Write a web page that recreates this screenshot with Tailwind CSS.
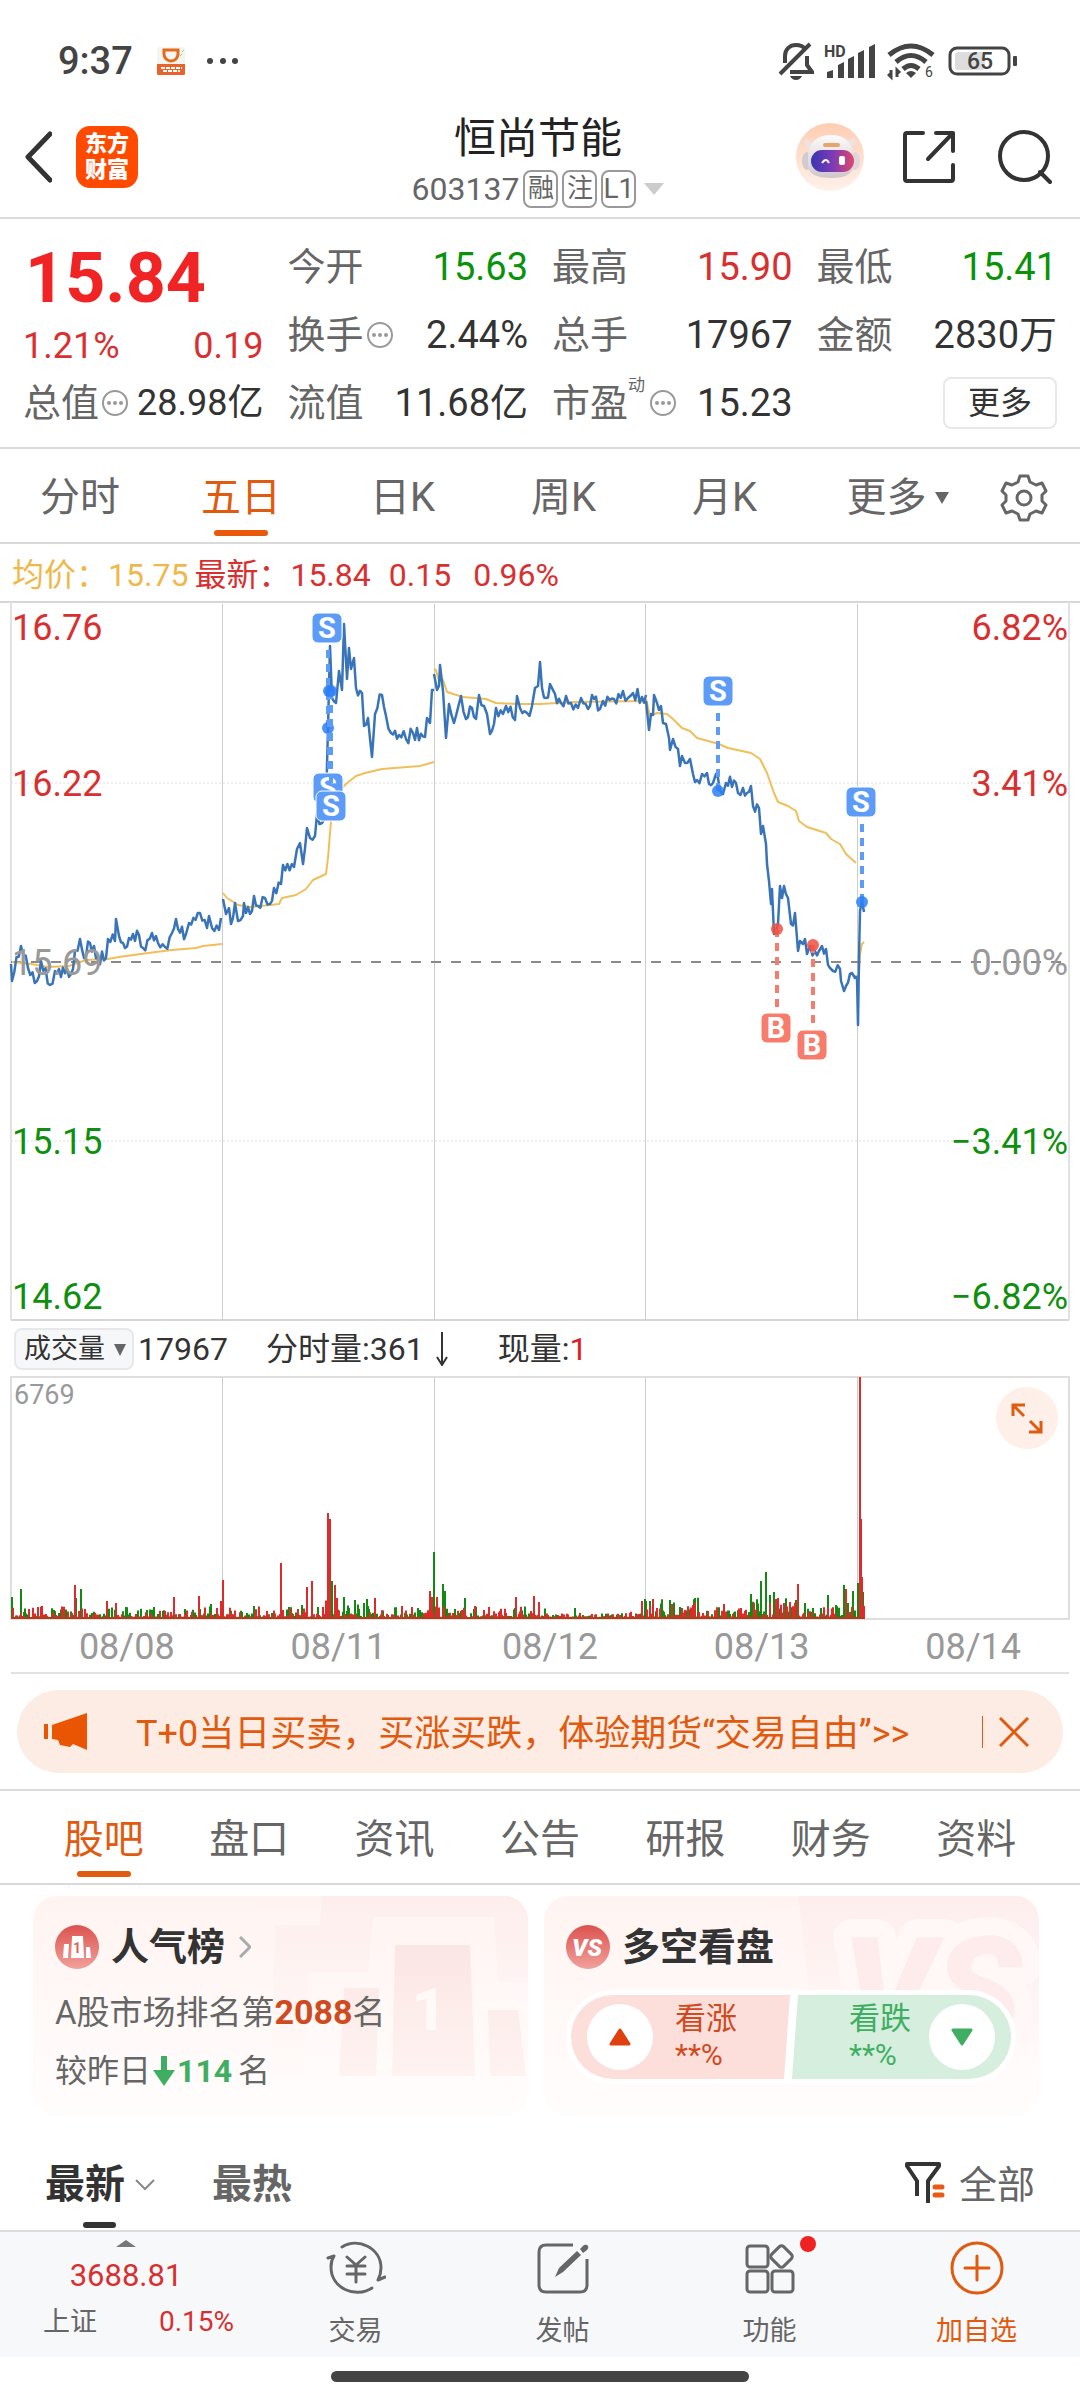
<!DOCTYPE html>
<html lang="zh-CN">
<head>
    <meta charset="UTF-8">
    <meta name="viewport" content="width=device-width, initial-scale=1.0">
    <title>恒尚节能 603137</title>
    <script src="https://cdn.jsdelivr.net/npm/@tailwindcss/browser@4"></script>
</head>
<body class="bg-white text-[#333] font-['Roboto','Noto_Sans_CJK_SC',sans-serif]">
    <!-- Status bar -->
    <div class="flex h-[110px] items-center justify-between pt-3 pr-[62px] pl-[58px] text-[#444]">
        <div class="flex items-center">
            <span class="text-[38px] leading-10 font-medium">9:37</span>
            <svg class="ml-6 h-[28px] w-[28px]" viewBox="0 0 28 28">
                <rect width="28" height="28" rx="3" fill="#f4f5f1"/>
                <path d="M7 3H21V7A7 7 0 0 1 7 7Z" fill="none" stroke="#e46a1c" stroke-width="3"/>
                <path d="M0 17H28V25a2 2 0 0 1-2 3H2a2 2 0 0 1-2-3Z" fill="#e8622a"/>
                <path d="M4 21H25M6 24H23" stroke="#fff" stroke-width="2" stroke-dasharray="4 1" fill="none"/>
                <path d="M25 5l2-2M23 9l2-2" stroke="#8ed28e" stroke-width="1"/>
            </svg>
            <svg class="ml-[22px] h-2 w-8" viewBox="0 0 32 8" fill="#444"><circle cx="3" cy="4" r="3"/><circle cx="16" cy="4" r="3"/><circle cx="28" cy="4" r="3"/></svg>
        </div>
        <div class="flex items-center">
            <svg class="h-[40px] w-[36px]" viewBox="0 0 36 40" fill="none" stroke="#444" stroke-width="4">
                <path d="M7 22V15C7 8 12 4 18 4c4 0 7 1 9 4M29 15v9l5 7H12M2 33 32 3"/>
                <path d="M12 35h12q-2 4-6 4t-6-4Z" fill="#444" stroke="none"/>
            </svg>
            <svg class="ml-[10px] h-[40px] w-[51px]" viewBox="0 0 51 40" fill="#444">
                <text x="0" y="16" font-size="16" font-weight="700">HD</text>
                <path d="M3 37v-6l6-2v8ZM14 37V24l6-3v16ZM24 37V18l6-3v22ZM34 37V12l6-3v28ZM45 37V6l6-3v34Z"/>
            </svg>
            <svg class="ml-[12px] h-[40px] w-[48px]" viewBox="0 0 48 40" fill="none" stroke="#444" stroke-width="5">
                <path d="M2 14Q24-4 46 14M9 21Q24 8 39 21M16 28q8-7 16 0"/>
                <path d="M19 32q5-4 10 0l-5 5Z" fill="#444" stroke="none"/>
                <path d="M4 29v7l-3-3M10 36v-7l3 3" stroke-width="3"/>
                <text x="38" y="36" font-size="14" fill="#444" stroke="none">6</text>
            </svg>
            <svg class="ml-[13px] h-[30px] w-[70px]" viewBox="0 0 70 30">
                <rect x="7" y="6" width="30" height="18" rx="3" fill="#ddd"/>
                <rect x="2" y="2" width="59" height="26" rx="7" fill="none" stroke="#444" stroke-width="3"/>
                <rect x="65" y="10" width="4" height="10" rx="1" fill="#444"/>
                <text x="32" y="23" font-size="23" font-weight="500" text-anchor="middle" fill="#444">65</text>
            </svg>
        </div>
    </div>

    <!-- Header -->
    <header class="grid h-[109px] grid-cols-[1fr_auto_1fr] items-center border-b-2 border-[#dadada] pr-7 pl-6">
        <div class="flex items-center gap-6 pb-3.5">
            <button aria-label="返回"><svg class="h-[52px] w-7" viewBox="0 0 28 52" fill="none" stroke="#333" stroke-width="5" stroke-linecap="round" stroke-linejoin="round"><path d="M26 3 4 26 26 49"/></svg></button>
            <a href="#" class="grid h-[62px] w-[62px] place-content-center rounded-[14px] bg-[#ff4a00] text-center text-[22px] leading-[26px] font-black text-white">东方<br>财富</a>
        </div>
        <div class="flex flex-col items-center">
            <h1 class="text-[42px] leading-[50px] text-[#222]">恒尚节能</h1>
            <button class="flex h-[50px] items-center gap-1 text-[32px] text-[#666]">
                <span>603137</span>
                <span class="flex h-[38px] w-[35px] items-center justify-center rounded-lg border-2 border-[#999] text-[26px]">融</span>
                <span class="flex h-[38px] w-[35px] items-center justify-center rounded-lg border-2 border-[#999] text-[26px]">注</span>
                <span class="flex h-[38px] w-[35px] items-center justify-center rounded-lg border-2 border-[#999] text-[28px]">L1</span>
                <svg class="ml-1 h-3 w-5" viewBox="0 0 20 12" fill="#ccc"><path d="M0 0H20L10 12Z"/></svg>
            </button>
        </div>
        <div class="flex items-center justify-end pb-3.5">
            <button aria-label="智能助手">
                <svg class="h-[68px] w-[68px]" viewBox="0 0 68 68">
                    <defs>
                        <linearGradient id="halo" x1="0" y1="0" x2="0" y2="1"><stop offset="0" stop-color="#ffcdb2"/><stop offset="1" stop-color="#fff1ea"/></linearGradient>
                        <linearGradient id="visor"><stop offset="0" stop-color="#3a35b0"/><stop offset=".5" stop-color="#7b3bb5"/><stop offset="1" stop-color="#e0486a"/></linearGradient>
                        <linearGradient id="head" x1="0" y1="0" x2="0" y2="1"><stop offset="0" stop-color="#fdfbfb"/><stop offset="1" stop-color="#cfc6cc"/></linearGradient>
                    </defs>
                    <circle cx="34" cy="34" r="34" fill="url(#halo)"/>
                    <path d="M10 15q-4 9 5 12l6-7q-7 1-11-5ZM58 13q4 9-5 12l-6-7q7 1 11-5Z" fill="#eee3e3"/>
                    <ellipse cx="11" cy="38" rx="5" ry="9" fill="#cfcbd0"/><ellipse cx="59" cy="38" rx="5" ry="9" fill="#ddd6da"/>
                    <path d="M12 35C12 19 22 12 35 12s22 7 22 23v8q0 12-22 12T12 43Z" fill="url(#head)"/>
                    <rect x="15" y="27" width="43" height="22" rx="11" fill="url(#visor)"/>
                    <path d="M26 40q4-6 7 0" fill="none" stroke="#fff" stroke-width="2"/>
                    <rect x="43" y="33" width="6" height="9" rx="2" fill="#fff"/>
                    <rect x="27" y="20" width="17" height="4" rx="2" fill="#e5a66d"/>
                </svg>
            </button>
            <button aria-label="分享" class="ml-[39px]"><svg class="h-[52px] w-[52px]" viewBox="0 0 52 52" fill="none" stroke="#333" stroke-width="4" stroke-linecap="round" stroke-linejoin="round"><path d="M20 2H4Q2 2 2 4V48Q2 50 4 50H48Q50 50 50 48V34M33 2H50V20M49 3 25 28"/></svg></button>
            <button aria-label="搜索" class="ml-[43px]"><svg class="h-[54px] w-[54px]" viewBox="0 0 54 54" fill="none" stroke="#333" stroke-width="4" stroke-linecap="round"><circle cx="26" cy="26" r="24"/><path d="m42 42 10 10"/></svg></button>
        </div>
    </header>

    <!-- Quote -->
    <section class="grid h-[230px] grid-cols-4 gap-x-6 border-b-2 border-[#dadada] px-[23px] pt-3.5 text-[38px] leading-[44px] *:min-w-0">
        <div>
            <div class="flex h-[90px] items-center pl-0.5 text-[70px] leading-none font-bold text-[#f02424]">15.84</div>
            <div class="flex h-[46px] items-center justify-between text-[36px] text-[#d83030]"><span>1.21%</span><span>0.19</span></div>
            <div class="flex h-[68px] items-center justify-between whitespace-nowrap">
                <span class="flex items-center gap-[2px] text-[#666]">总值<svg class="h-7 w-7" viewBox="0 0 28 28" fill="#999"><circle cx="14" cy="14" r="12" fill="none" stroke="#999" stroke-width="2"/><circle cx="8" cy="14" r="2"/><circle cx="14" cy="14" r="2"/><circle cx="20" cy="14" r="2"/></svg></span>
                <span class="text-[36px]">28.98亿</span>
            </div>
        </div>
        <div>
            <div class="flex h-[68px] items-center justify-between"><span class="text-[#666]">今开</span><span class="text-[#0a930a]">15.63</span></div>
            <div class="flex h-[68px] items-center justify-between">
                <span class="flex items-center gap-[2px] text-[#666]">换手<svg class="h-7 w-7" viewBox="0 0 28 28" fill="#999"><circle cx="14" cy="14" r="12" fill="none" stroke="#999" stroke-width="2"/><circle cx="8" cy="14" r="2"/><circle cx="14" cy="14" r="2"/><circle cx="20" cy="14" r="2"/></svg></span>
                <span>2.44%</span>
            </div>
            <div class="flex h-[68px] items-center justify-between"><span class="text-[#666]">流值</span><span>11.68亿</span></div>
        </div>
        <div>
            <div class="flex h-[68px] items-center justify-between"><span class="text-[#666]">最高</span><span class="text-[#d83030]">15.90</span></div>
            <div class="flex h-[68px] items-center justify-between"><span class="text-[#666]">总手</span><span>17967</span></div>
            <div class="flex h-[68px] items-center justify-between">
                <span class="flex items-center text-[#666]">市盈<small class="mb-9 text-[17px] leading-5">动</small><svg class="ml-1 h-7 w-7" viewBox="0 0 28 28" fill="#999"><circle cx="14" cy="14" r="12" fill="none" stroke="#999" stroke-width="2"/><circle cx="8" cy="14" r="2"/><circle cx="14" cy="14" r="2"/><circle cx="20" cy="14" r="2"/></svg></span>
                <span>15.23</span>
            </div>
        </div>
        <div>
            <div class="flex h-[68px] items-center justify-between"><span class="text-[#666]">最低</span><span class="text-[#0a930a]">15.41</span></div>
            <div class="flex h-[68px] items-center justify-between"><span class="text-[#666]">金额</span><span>2830万</span></div>
            <div class="flex h-[68px] items-center justify-end"><button class="h-[52px] w-[114px] rounded-lg border-2 border-[#e8e8e8] text-[32px] leading-10">更多</button></div>
        </div>
    </section>

    <!-- Period tabs -->
    <nav class="grid h-[95px] grid-cols-[160fr_162fr_161fr_161fr_161fr_185fr_90fr] border-b-2 border-[#dadada] text-[40px] text-[#666] *:pt-1">
        <button>分时</button>
        <button class="relative text-[#e05a10]">五日<span class="absolute bottom-1.5 left-1/2 h-1.5 w-[54px] -translate-x-1/2 rounded-full bg-[#e8590c]"></span></button>
        <button>日K</button>
        <button>周K</button>
        <button>月K</button>
        <button class="flex items-center justify-center gap-2">更多<svg class="h-3 w-[14px]" viewBox="0 0 14 12" fill="#666"><path d="M0 0H14L7 12Z"/></svg></button>
        <button aria-label="设置" class="flex items-center pl-[10px]"><svg class="h-[48px] w-[48px]" viewBox="0 0 48 48" fill="none" stroke="#666" stroke-width="3" stroke-linejoin="round"><path d="M20 2H28L30 8 36 11 42 9 46 17 42 21V27L46 31 42 39 36 37 30 40 28 46H20L18 40 12 37 6 39 2 31 6 27V21L2 17 6 9 12 11 18 8Z"/><circle cx="24" cy="24" r="7"/></svg></button>
    </nav>

    <!-- Price chart -->
    <div class="flex h-[57px] items-center gap-1.5 px-3 pt-1 text-[32px] leading-10 whitespace-nowrap text-[#d83030]">
        <span class="text-[#f0b84a]">均价：15.75</span><span>最新：15.84</span><span class="pl-3">0.15</span><span class="pl-4">0.96%</span>
    </div>
    <svg id="priceChart" class="block h-auto w-full" viewBox="0 0 1080 720" font-size="36" fill="none">
        <g stroke="#d6d6d6" stroke-width="2">
            <path d="M0 1H1080M11 719H1069" />
            <path d="M11 1V719M1069 1V719" stroke="#e2e2e2"/>
            <path d="M222.500 3V719M434.500 3V719M645.500 3V719M857.500 3V719" stroke="#ccc" stroke-width="1"/>
            <path d="M11 182H1069M11 540H1069" stroke="#ddd" stroke-width="1" stroke-dasharray="2 2"/>
        </g>
        <path d="M11 361H1069" stroke="#8a8a8a" stroke-width="2" stroke-dasharray="10 10"/>
        <path id="avgLine" stroke="#f0bf5a" stroke-width="2" stroke-linejoin="round"/>
        <path id="priceLine" stroke="#3a74b8" stroke-width="2.500" stroke-linejoin="round"/>
        <g fill="#d83030"><text x="12" y="39">16.76</text><text x="12" y="195">16.22</text></g>
        <g fill="#999"><text x="12" y="374">15.69</text><text x="1068" y="374" text-anchor="end">0.00%</text></g>
        <g fill="#0f8f0f"><text x="12" y="553">15.15</text><text x="12" y="708">14.62</text></g>
        <g fill="#d83030" text-anchor="end"><text x="1068" y="39">6.82%</text><text x="1068" y="195">3.41%</text></g>
        <g fill="#0f8f0f" text-anchor="end"><text x="1068" y="553">−3.41%</text><text x="1068" y="708">−6.82%</text></g>
        <g id="trades" font-weight="700" font-size="29" text-anchor="middle"></g>
    </svg>

    <!-- Volume chart -->
    <div class="flex h-[55px] items-center px-[14px] text-[32px] whitespace-nowrap">
        <label class="relative">
            <select aria-label="指标" class="block h-[42px] w-[120px] appearance-none rounded-lg border-2 border-[#e6e8ea] bg-[#f6f7f9] pl-2 text-[27px] leading-9"><option>成交量</option></select>
            <svg class="pointer-events-none absolute top-4 right-2 h-3 w-3" viewBox="0 0 12 12" fill="#666"><path d="M0 0H12L6 12Z"/></svg>
        </label>
        <span class="pl-1">17967</span>
        <span class="pl-[38px]">分时量:361</span>
        <svg class="ml-3 h-[34px] w-3" viewBox="0 0 12 34" fill="none" stroke="#333" stroke-width="2"><path d="M6 0V32M1 25l5 8 5-8"/></svg>
        <span class="pl-[50px]">现量:<span class="text-[#e02020]">1</span></span>
    </div>
    <div class="relative">
        <svg class="block h-auto w-full" viewBox="0 0 1080 244" fill="none">
            <path d="M11 1H1069V243H11Z" stroke="#dfdfdf" stroke-width="2"/>
            <path d="M222.500 1V243M434.500 1V243M645.500 1V243M857.500 1V243" stroke="#ccc" stroke-width="1"/>
            <path id="volDown" stroke="#128a12" stroke-width="2"/>
            <path id="volUp" stroke="#dd2a2a" stroke-width="2"/>
            <path d="M11 242H864" stroke="#b03a1a" stroke-width="2"/>
            <text x="14" y="28" font-size="27" fill="#999">6769</text>
        </svg>
        <button aria-label="全屏" class="absolute top-[11px] right-[22px] grid h-[62px] w-[62px] place-items-center rounded-full bg-[#fef0e8]"><svg class="h-8 w-8" viewBox="0 0 32 32" fill="none" stroke="#e05a10" stroke-width="3"><path d="M2 14V3H14M2 3 13 14M30 19V30H18M30 30 19 19"/></svg></button>
    </div>
    <div class="mx-[11px] grid h-[54px] grid-cols-5 items-center border-b-2 border-[#e2e2e2] pt-0.5 text-center text-[36px] leading-10 text-[#999] *:pl-5">
        <span>08/08</span><span>08/11</span><span>08/12</span><span>08/13</span><span>08/14</span>
    </div>

    <!-- Promo banner -->
    <div class="mx-[17px] mt-4 mb-4 flex h-[83px] items-center rounded-full bg-[#fdece3] pr-[34px] pl-[27px] text-[#e05a10]">
        <svg class="h-[37px] w-[43px]" viewBox="0 0 43 37" fill="#ea5504"><path d="M0 11H4V26H0ZM8 12 43 0V37L29 31 26 34 16 32 14 27 8 26Z"/></svg>
        <a href="#" class="flex-1 pt-1 pl-[49px] text-[36px] leading-[44px] whitespace-nowrap">T+0当日买卖，买涨买跌，体验期货“交易自由”&gt;&gt;</a>
        <span class="h-8 w-px bg-[#e05a10]"></span>
        <button aria-label="关闭" class="ml-4"><svg class="h-[30px] w-[30px]" viewBox="0 0 30 30" fill="none" stroke="#e05a10" stroke-width="3"><path d="M1 1 29 29M29 1 1 29"/></svg></button>
    </div>

    <!-- Section tabs -->
    <nav class="grid h-[96px] grid-cols-7 border-y-2 border-[#dadada] px-[31px] text-[40px] text-[#666] *:pt-1.5">
        <button class="relative text-[#e05a10]">股吧<span class="absolute bottom-1.5 left-1/2 h-1.5 w-[54px] -translate-x-1/2 rounded-full bg-[#e05a10]"></span></button>
        <button>盘口</button>
        <button>资讯</button>
        <button>公告</button>
        <button>研报</button>
        <button>财务</button>
        <button>资料</button>
    </nav>

    <!-- Cards -->
    <section class="grid grid-cols-2 gap-4 pt-[11px] pr-[41px] pl-[33px] leading-10">
        <div class="relative h-[220px] overflow-hidden rounded-[24px] bg-linear-to-b from-[#fff4f2] to-[#fffdfc] pt-7 pl-[22px]">
            <svg class="absolute top-0 right-0 h-[220px] w-[495px]" viewBox="0 0 495 220">
                <defs><linearGradient id="fade" x1="0" y1="0" x2="0" y2="220" gradientUnits="userSpaceOnUse"><stop offset="0" stop-color="#fdeeec"/><stop offset=".8" stop-color="#fffaf9"/></linearGradient>
                <linearGradient id="podium" x1="0" y1="0" x2="0" y2="1"><stop offset="0" stop-color="#fbe6e4"/><stop offset="1" stop-color="#fef3f1"/></linearGradient></defs>
                <path d="M242 29H287L289 0H495V86H465L461 21H340L335 76H276L270 180H238Z" fill="url(#fade)"/>
                <path d="M362 49H437L442 180H359ZM311 92H346L343 180H306ZM455 114H485L493 180H457Z" fill="url(#podium)"/>
                <text x="396" y="134" font-size="60" font-weight="900" text-anchor="middle" fill="#fff9f8">1</text>
            </svg>
            <a href="#" class="relative flex h-[46px] items-center text-[38px] font-bold">
                <svg class="mr-3 h-11 w-11" viewBox="0 0 44 44"><defs><linearGradient id="badge" x1="0" y1="0" x2="0" y2="1"><stop offset="0" stop-color="#dc524e"/><stop offset="1" stop-color="#f1a19c"/></linearGradient></defs><circle cx="22" cy="22" r="22" fill="url(#badge)"/><path d="M17 11H28L29 33H16ZM9 19H14L13 33H8ZM31 22H35L36 33H31Z" fill="#fff"/><text x="22" y="28" font-size="14" font-weight="700" text-anchor="middle" fill="#dd6661">1</text></svg>
                人气榜
                <svg class="ml-[14px] h-[22px] w-3" viewBox="0 0 12 22" fill="none" stroke="#aaa" stroke-width="3"><path d="M1 1 11 11 1 21"/></svg>
            </a>
            <p class="relative mt-[22px] text-[33px] text-[#666]">A股市场排名第<b class="text-[34px] text-[#d04a20]">2088</b>名</p>
            <p class="relative mt-[18px] flex items-center text-[32px] text-[#666]">较昨日<svg class="mx-0.5 h-[30px] w-[22px]" viewBox="0 0 22 30" fill="#3fae62"><path d="M8 0H14V14H22L11 30 0 14H8Z"/></svg><b class="mr-1.5 text-[32px] text-[#3fae62]">114</b>名</p>
        </div>
        <div class="relative h-[220px] overflow-hidden rounded-[24px] bg-linear-to-b from-[#fff4f2] to-[#fffdfc] pt-7 pr-[23px] pl-[22px]">
            <!-- VS watermark, mostly hidden behind the vote bar -->
            <svg class="absolute top-0 right-0 h-[220px] w-[495px]" viewBox="0 0 495 220">
                <path d="M254 0H495V150H272Z" fill="url(#fade)"/>
                <text x="298" y="144" font-size="144" font-weight="900" font-style="italic" stroke="#fff8f6" stroke-width="36" stroke-linejoin="round" paint-order="stroke" fill="#fdeceb">VS</text>
            </svg>
            <h2 class="relative flex h-[46px] items-center text-[38px] font-bold">
                <svg class="mr-3 h-11 w-11" viewBox="0 0 44 44"><circle cx="22" cy="22" r="22" fill="url(#badge)"/><text x="21" y="31" font-size="24" font-weight="900" font-style="italic" text-anchor="middle" fill="#fff">VS</text></svg>
                多空看盘
            </h2>
            <div class="relative mt-5 flex h-[94px] overflow-hidden rounded-full border-[5px] border-white bg-white text-[31px] leading-9">
                <button class="flex flex-1 items-center bg-[#fcdedb] pl-4 text-left text-[#d04a20] [clip-path:polygon(0_0,100%_0,calc(100%-6px)_100%,0_100%)]">
                    <span class="mr-[22px] grid h-[66px] w-[66px] place-items-center rounded-full bg-white"><svg class="h-[18px] w-[22px]" viewBox="0 0 22 18" fill="#e04010" stroke="#e04010" stroke-width="3" stroke-linejoin="round"><path d="M11 2 20 16H2Z"/></svg></span>
                    <span>看涨<br><span class="text-[30px]">**%</span></span>
                </button>
                <button class="ml-[2px] flex flex-1 items-center justify-end bg-[#d5eedd] pr-4 text-left text-[#3fae62] [clip-path:polygon(6px_0,100%_0,100%_100%,0_100%)]">
                    <span>看跌<br><span class="text-[30px]">**%</span></span>
                    <span class="ml-[18px] grid h-[66px] w-[66px] place-items-center rounded-full bg-white"><svg class="h-[18px] w-[22px]" viewBox="0 0 22 18" fill="#3fae62" stroke="#3fae62" stroke-width="3" stroke-linejoin="round"><path d="M2 2H20L11 16Z"/></svg></span>
                </button>
            </div>
        </div>
    </section>

    <!-- Post sorting -->
    <div class="flex h-[114px] items-center px-[45px] text-[40px] leading-[52px]">
        <button class="relative flex h-full items-center pt-6 font-bold">最新<svg class="ml-[10px] h-3 w-5" viewBox="0 0 20 12" fill="none" stroke="#888" stroke-width="2"><path d="M1 1 10 10 19 1"/></svg><span class="absolute bottom-0.5 left-[38px] h-1.5 w-[33px] rounded-full bg-[#333]"></span></button>
        <button class="ml-[57px] pt-6 font-bold text-[#666]">最热</button>
        <button class="ml-auto flex items-center gap-[14px] pt-6 text-[38px] text-[#666]">
            <svg class="mb-1 h-[42px] w-10" viewBox="0 0 40 42" fill="none" stroke="#333" stroke-width="4" stroke-linejoin="round"><path d="M12 34V19L2 4V2H34V4L23 19V41"/><path d="M30 25H37M30 33H37" stroke="#ea5a14" stroke-width="5" stroke-linecap="round"/></svg>全部</button>
    </div>

    <!-- Bottom bar -->
    <footer class="grid h-[127px] grid-cols-[252fr_207fr_207fr_207fr_207fr] border-t-2 border-[#dadcde] bg-[#f6f8fa] text-center text-[27px] leading-9 text-[#666]">
        <a href="#" class="flex flex-col items-center pt-[8px] text-[#d83030]">
            <svg class="h-[7px] w-5" viewBox="0 0 20 7" fill="#777"><path d="M0 7 10 0 20 7Z"/></svg>
            <span class="mt-[11px] text-[31px]">3688.81</span>
            <span class="mt-2.5 flex w-full justify-between pr-[18px] pl-[43px]"><span class="text-[#666]">上证</span><span class="text-[28px]">0.15%</span></span>
        </a>
        <a href="#" class="flex flex-col items-center justify-between pt-[9px] pb-[8px]">
            <svg class="h-[54px] w-[60px]" viewBox="0 0 60 54" fill="none" stroke="#666" stroke-width="3" stroke-linecap="round" stroke-linejoin="round"><path d="M16 6C32-4 55 7 55 27c0 5-1 8-3 12l7-3M46 47C29 58 5 47 5 26c0-5 1-8 3-11L2 17M21 16 30 24 39 16M30 24V41M21 25H39M21 33H39"/></svg>
            交易
        </a>
        <a href="#" class="flex flex-col items-center justify-between pt-[9px] pb-[8px]">
            <svg class="h-[54px] w-[52px]" viewBox="0 0 52 54" fill="none" stroke="#666" stroke-width="3"><path d="M36 4H9Q2 4 2 11V44Q2 51 9 51H43Q50 51 50 44V18"/><path d="M18 36 22 27 40 10 44 14 26 31ZM43 8 47 4Q50 3 51 5T50 9L46 12Z" fill="#666" stroke="none"/></svg>
            发帖
        </a>
        <a href="#" class="relative flex flex-col items-center justify-between pt-[9px] pb-[8px]">
            <svg class="h-[54px] w-[50px]" viewBox="0 0 50 54" fill="none" stroke="#666" stroke-width="3"><rect x="2" y="5" width="21" height="21" rx="3"/><rect x="2" y="30" width="21" height="21" rx="3"/><rect x="27" y="30" width="21" height="21" rx="3"/><rect x="28" y="7" width="17" height="17" rx="3" transform="rotate(45 36.500 15.500)"/></svg>
            功能
            <span class="absolute top-1 left-[134px] h-4 w-4 rounded-full bg-[#ee2222]"></span>
        </a>
        <a href="#" class="flex flex-col items-center justify-between pt-[9px] pb-[8px] text-[#e05a10]">
            <svg class="h-[54px] w-[54px]" viewBox="0 0 54 54" fill="none" stroke="#e05a10" stroke-width="3" stroke-linecap="round"><circle cx="27" cy="27" r="25"/><path d="M15 27H39M27 15V39"/></svg>
            加自选
        </a>
    </footer>
    <div class="flex h-[43px] items-center justify-center pb-1"><span class="h-[11px] w-[418px] rounded-full bg-[#444]"></span></div>

    <script>
        // one array per trading day: x,y pairs
        const price = [
            [11,363,12,380,21,345,28,367,37,380,41,360,50,384,55,370,71,373,75,350,80,338,84,357,90,342,98,357,106,357,108,338,115,340,116,318,119,335,125,347,133,333,139,334,143,347,152,332,158,342,165,346,172,332,176,318,178,328,186,333,189,322,200,312,207,327,209,315,212,327,219,329,221,317],
            [223,298,226,313,229,307,231,323,235,302,238,320,243,315,244,302,250,313,254,295,258,305,265,297,270,303,274,287,281,283,283,264,294,266,297,248,300,242,303,263,307,227,310,237,315,235,317,213,322,222,326,203,328,127,330,45,332,97,336,102,339,70,342,89,344,23,347,78,349,47,351,68,354,57,356,87,362,92,364,125,368,117,372,156,375,113,382,94,386,115,391,132,399,134,406,138,413,132,425,136,427,117,430,122,432,89,434,89],
            [434,73,437,89,439,85,440,64,443,90,446,137,449,103,454,122,461,95,466,118,472,107,476,118,479,94,484,105,487,113,490,133,494,123,496,107,503,113,506,105,515,119,517,95,520,107,527,112,532,105,535,87,538,85,540,61,542,87,546,97,550,83,555,93,561,102,566,95,571,102,578,107,581,97,588,108,592,94,600,108,603,100,614,98,623,90,628,97,633,92,642,96,646,94],
            [646,100,649,129,651,113,653,114,654,94,657,102,661,105,663,122,666,123,669,137,670,149,673,138,678,148,680,165,682,155,685,162,690,158,693,173,697,179,702,173,707,172,709,183,713,182,716,173,718,177,720,190,723,193,726,182,736,182,738,192,743,187,747,192,751,185,753,205,759,207,761,233,763,225,766,243,767,263,769,280,771,303,772,288,774,333,778,323,780,285,782,297,784,285,788,297,791,323,795,312,798,350,800,340,803,343,805,338,807,353,810,345,815,350,819,350,822,345,826,348,830,367,833,370,840,368,841,380,844,390,846,385,852,372,855,377,857,375],
            [857,377,858,424,859,357,860,310,862,300,864,311]
        ];
        const avg = [
            [12,361,31,363,48,366,69,365,86,359,108,358,119,356,148,352,172,349,196,347,203,345,222,343],
            [223,292,227,297,238,304,251,306,279,303,282,297,296,294,306,288,313,279,326,273,328,257,331,220,332,203,339,190,346,183,356,175,365,172,382,168,420,165,434,161],
            [434,68,436,69,438,77,443,79,447,91,463,96,486,98,496,102,517,103,540,103,574,101,646,100],
            [646,98,650,115,657,112,667,113,673,118,682,127,690,130,697,137,719,143,728,147,751,152,760,158,767,172,774,192,778,201,788,205,796,210,799,220,807,226,826,232,831,238,840,243,846,253,856,262],
            [859,373,860,353,862,343,864,341]
        ];
        // tall volume bars: x, height, 1 = up
        const spikes = [12,22,0,21,30,0,38,12,1,42,13,1,75,34,1,76,21,0,81,30,0,107,18,1,116,16,1,174,22,1,185,10,0,199,23,1,211,15,0,221,18,1,223,39,1,281,56,1,298,10,1,302,14,0,307,32,1,312,38,1,323,12,1,328,106,1,330,100,1,332,38,0,335,34,1,337,21,1,344,22,0,355,19,0,364,16,0,375,21,1,402,13,1,412,12,1,430,28,1,432,22,1,434,67,0,437,22,1,443,35,0,445,28,0,465,21,0,475,13,1,489,12,1,516,22,1,534,23,1,539,17,1,575,11,0,642,18,1,645,20,0,650,18,0,653,20,1,670,19,0,680,12,0,695,21,0,724,15,1,751,25,0,761,38,0,766,47,0,770,24,0,774,27,0,776,20,1,778,21,1,796,19,0,798,35,1,805,16,0,828,24,0,844,34,0,846,30,1,853,28,0,858,36,0,860,242,1,861,100,1,862,42,1,863,27,0,864,13,1];

        let seed = 7;
        const rnd = () => (seed = (seed * 16807) % 2147483647) / 2147483647;

        function linePath(days, noise) {
            let d = "";
            days.forEach(p => {
                d += `M${p[0]} ${p[1]}`;
                for (let i = 2; i < p.length; i += 2) {
                    const dx = p[i] - p[i - 2], dy = p[i + 1] - p[i - 1];
                    const steps = noise ? Math.floor(dx / 2) : 1;
                    for (let s = 1; s < steps; s++) {
                        const y = p[i - 1] + dy * s / steps + (s % 2 ? 1 : -1) * rnd() * noise;
                        d += `L${p[i - 2] + dx * s / steps} ${y.toFixed(1)}`;
                    }
                    d += `L${p[i]} ${p[i + 1]}`;
                }
            });
            return d;
        }
        document.getElementById("priceLine").setAttribute("d", linePath(price, 7));
        document.getElementById("avgLine").setAttribute("d", linePath(avg, 0));

        // Volume bars
        const bars = ["", ""];
        for (let x = 12; x < 864; x++) {
            const busy = (x > 325 && x < 375) || (x > 640 && x < 700) || (x > 750 && x < 800) || x > 825;
            const quiet = x > 545 && x < 630;
            const h = 2 + Math.pow(rnd(), 3) * (busy ? 20 : quiet ? 4 : 11);
            bars[rnd() < (busy ? 0.35 : 0.6) ? 1 : 0] += `M${x} 243v-${h.toFixed(1)}`;
        }
        for (let i = 0; i < spikes.length; i += 3) bars[spikes[i + 2]] += `M${spikes[i]} 243v-${spikes[i + 1]}`;
        document.getElementById("volDown").setAttribute("d", bars[0]);
        document.getElementById("volUp").setAttribute("d", bars[1]);

        // Buy / sell marks: type, label x, label y, dot x, dot y
        const trades = [["S", 327, 27, 328, 127], ["S", 328, 187, 329, 90], ["S", 331, 205, 331, 90], ["S", 718, 90, 718, 190], ["S", 861, 201, 862, 301], ["B", 776, 427, 777, 328], ["B", 812, 444, 813, 344]];
        document.getElementById("trades").innerHTML = trades.map(([t, x, y, dx, dy]) => {
            const c = t === "S" ? "#5c9cf8" : "#f87c6c";
            const dot = t === "S" ? "#2b7ff5" : "#f0503f";
            return `<path d="M${dx} ${dy}V${y + (y < dy ? 18 : -18)}" stroke="${c}" stroke-width="4" stroke-dasharray="8 6"/>
                <circle cx="${dx}" cy="${dy}" r="6" fill="${dot}" fill-opacity=".85"/>
                <rect x="${x - 15}" y="${y - 15}" width="30" height="30" rx="6" fill="${c}" stroke="#fff" stroke-width="1"/>
                <text x="${x}" y="${y + 10}" fill="#fff">${t}</text>`;
        }).join("");
    </script>
</body>
</html>
